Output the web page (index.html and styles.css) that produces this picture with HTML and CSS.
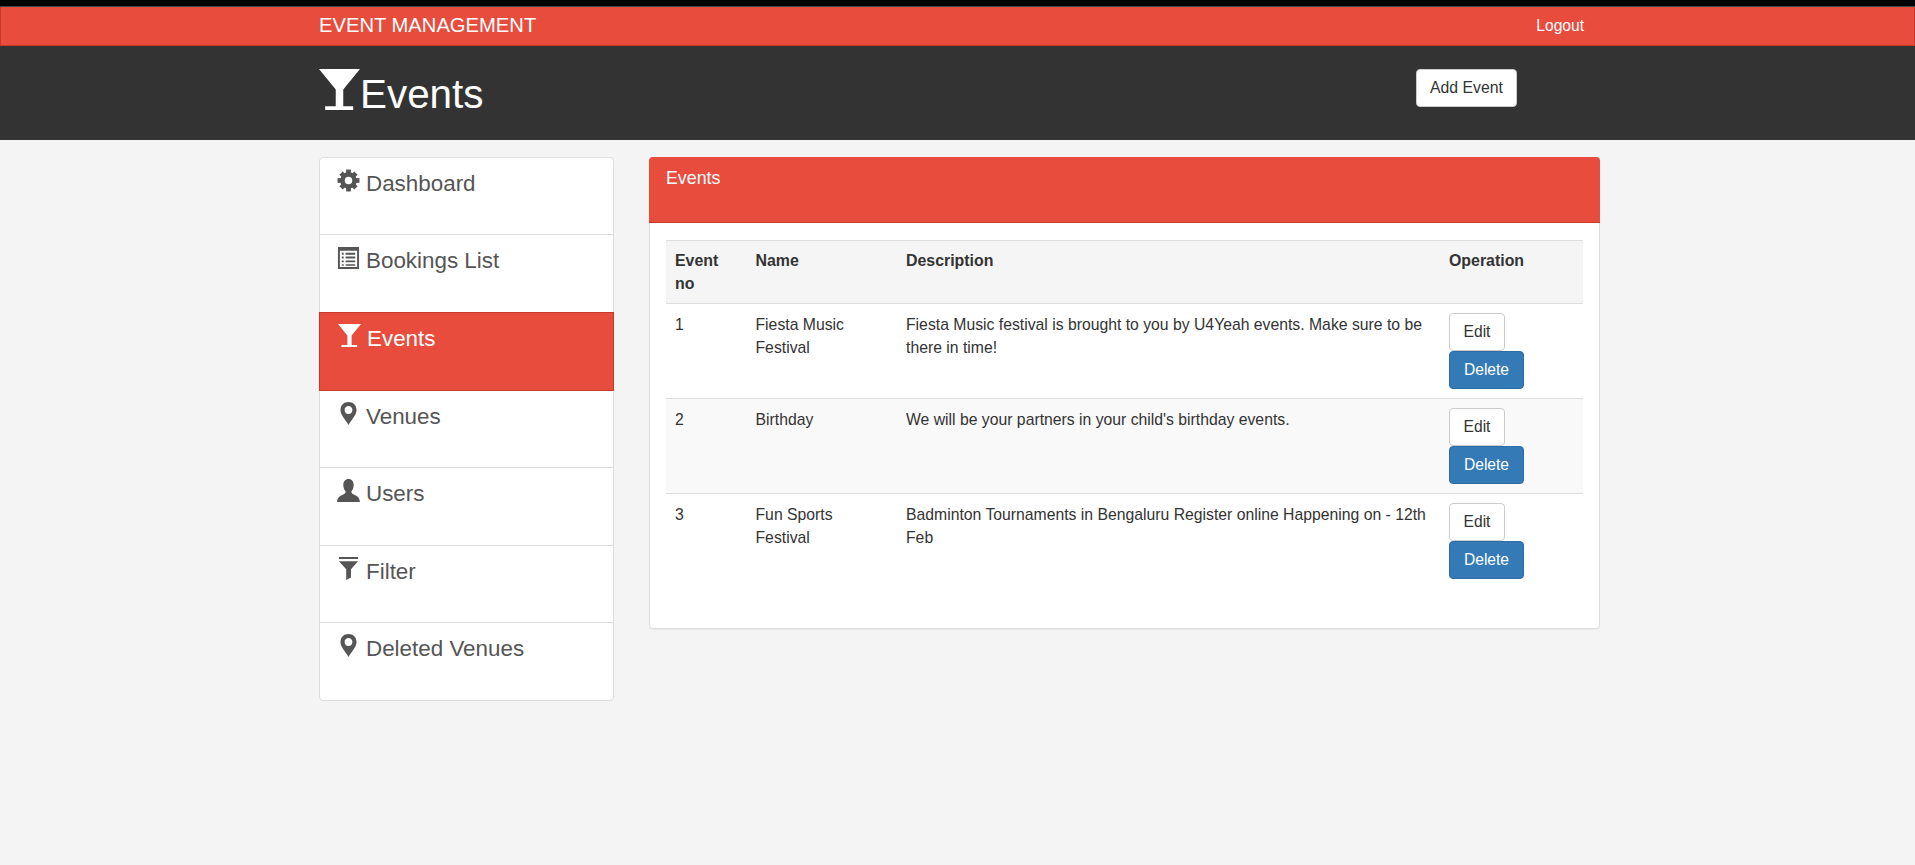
FILE: index.html
```html
<!DOCTYPE html>
<html lang="en">
<head>
    <meta charset="UTF-8">
    <meta name="viewport" content="width=device-width, initial-scale=1.0">
    <title>Event Management</title>
    <link rel="stylesheet" href="styles.css">
</head>
<body>
    <svg class="icon-defs" aria-hidden="true">
        <symbol id="i-glass" viewBox="0 0 24 24">
            <path d="M0 0H24L14.2 12V21.8H20V24H3.6V21.8H9.8V12Z"/>
        </symbol>
        <symbol id="i-cog" viewBox="-.6 -.6 25.2 25.2">
            <circle cx="12" cy="12" r="6.6" fill="none" stroke="currentColor" stroke-width="5"/>
            <rect x="9.4" y="0" width="5.2" height="5"/>
            <rect x="9.4" y="19" width="5.2" height="5"/>
            <rect x="0" y="9.4" width="5" height="5.2"/>
            <rect x="19" y="9.4" width="5" height="5.2"/>
            <rect x="9.4" y="0.5" width="5.2" height="5" transform="rotate(45 12 12)"/>
            <rect x="9.4" y="0.5" width="5.2" height="5" transform="rotate(135 12 12)"/>
            <rect x="9.4" y="0.5" width="5.2" height="5" transform="rotate(225 12 12)"/>
            <rect x="9.4" y="0.5" width="5.2" height="5" transform="rotate(315 12 12)"/>
        </symbol>
        <symbol id="i-list" viewBox="0 0 24 24">
            <path fill-rule="evenodd" d="M1 1H23V24H1ZM3 5V22H21V5Z"/>
            <path d="M5 7H7V9H5ZM9 7H19V9H9ZM5 11H7V13H5ZM9 11H19V13H9ZM5 15H7V17H5ZM9 15H19V17H9ZM5 19H7V20.5H5ZM9 19H19V20.5H9Z"/>
        </symbol>
        <symbol id="i-marker" viewBox="0 0 24 24">
            <path fill-rule="evenodd" d="M12 0C17 0 20.4 3.6 20.4 8.4C20.4 13.6 15 18.6 12 24C9 18.6 3.6 13.6 3.6 8.4C3.6 3.6 7 0 12 0ZM12 4.2C9.6 4.2 7.9 6 7.9 8.4C7.9 10.8 9.6 12.6 12 12.6C14.4 12.6 16.1 10.8 16.1 8.4C16.1 6 14.4 4.2 12 4.2Z"/>
        </symbol>
        <symbol id="i-user" viewBox="0 0 24 24">
            <path d="M12 0C15.4 0 17.4 2.6 17.4 6.2C17.4 9 16.4 11.4 15 13C15 14.6 15.6 15.4 18 16.4C21 17.6 23.4 19 24 24H0C.6 19 3 17.6 6 16.4C8.4 15.4 9 14.6 9 13C7.6 11.4 6.6 9 6.6 6.2C6.6 2.6 8.6 0 12 0Z"/>
        </symbol>
        <symbol id="i-filter" viewBox="0 0 24 24">
            <path d="M2 0H22V2.2H2ZM2 4.4H22L14.6 12.8V21.4L9.6 24V12.8Z"/>
        </symbol>
    </svg>

    <div class="topstrip"></div>

    <header class="navbar">
        <div class="wrap navbar-row">
            <a class="brand" href="#">EVENT MANAGEMENT</a>
            <a class="logout" href="#">Logout</a>
        </div>
    </header>

    <section class="titlebar">
        <div class="wrap titlebar-row">
            <h1 class="page-title"><svg class="title-icon"><use href="#i-glass"/></svg>Events</h1>
            <a class="btn btn-add" href="#">Add Event</a>
        </div>
    </section>

    <main class="wrap content">
        <ul class="side-list">
            <li class="side-item"><svg class="side-icon"><use href="#i-cog"/></svg>Dashboard</li>
            <li class="side-item"><svg class="side-icon"><use href="#i-list"/></svg>Bookings List</li>
            <li class="side-item active"><svg class="side-icon"><use href="#i-glass"/></svg>Events</li>
            <li class="side-item"><svg class="side-icon"><use href="#i-marker"/></svg>Venues</li>
            <li class="side-item"><svg class="side-icon"><use href="#i-user"/></svg>Users</li>
            <li class="side-item"><svg class="side-icon"><use href="#i-filter"/></svg>Filter</li>
            <li class="side-item"><svg class="side-icon"><use href="#i-marker"/></svg>Deleted Venues</li>
        </ul>

        <div class="panel">
            <div class="panel-heading">Events</div>
            <div class="panel-body">
                <table class="events-table">
                    <colgroup>
                        <col class="col-no">
                        <col class="col-name">
                        <col class="col-desc">
                        <col class="col-op">
                    </colgroup>
                    <thead>
                        <tr>
                            <th>Event no</th>
                            <th>Name</th>
                            <th>Description</th>
                            <th>Operation</th>
                        </tr>
                    </thead>
                    <tbody>
                        <tr>
                            <td>1</td>
                            <td>Fiesta Music Festival</td>
                            <td>Fiesta Music festival is brought to you by U4Yeah events. Make sure to be there in time!</td>
                            <td><div class="ops"><a class="btn btn-edit" href="#">Edit</a><a class="btn btn-delete" href="#">Delete</a></div></td>
                        </tr>
                        <tr>
                            <td>2</td>
                            <td>Birthday</td>
                            <td>We will be your partners in your child's birthday events.</td>
                            <td><div class="ops"><a class="btn btn-edit" href="#">Edit</a><a class="btn btn-delete" href="#">Delete</a></div></td>
                        </tr>
                        <tr>
                            <td>3</td>
                            <td>Fun Sports Festival</td>
                            <td>Badminton Tournaments in Bengaluru Register online Happening on - 12th Feb</td>
                            <td><div class="ops"><a class="btn btn-edit" href="#">Edit</a><a class="btn btn-delete" href="#">Delete</a></div></td>
                        </tr>
                    </tbody>
                </table>
            </div>
        </div>
    </main>
</body>
</html>
```

FILE: styles.css
```css
body{margin: 0; background-color: #f4f4f4; color: #333; font-family: "Liberation Sans", Arial, sans-serif; font-size: 15.75px; line-height: 23px;}
a{text-decoration: none; color: inherit;}
.icon-defs{display: none;}
.wrap{width: 1281px; margin-left: 319px;}

.topstrip{height: 6px; background-color: #000; border-bottom: 1px solid #444;}

.navbar{box-sizing: border-box; height: 39px; background-color: #e84c3d; border: 1px solid #c9392b; border-top: 0; color: #fff;}
.navbar-row{display: flex; justify-content: space-between; align-items: center; height: 36px; margin-left: 318px;}
.brand{font-size: 20.2px;}
.logout{font-size: 15.6px; margin-right: 16px;}

.titlebar{height: 94px; background-color: #333;}
.titlebar-row{display: flex; justify-content: space-between; align-items: flex-start;}
.page-title{display: flex; align-items: flex-start; margin: 23px 0 0; height: 41px; font-size: 40.4px; font-weight: 400; line-height: 50px; color: #fff;}
.title-icon{width: 41px; height: 41px; fill: #fff;}
.btn{display: inline-block; box-sizing: border-box; height: 38px; font-size: 15.6px; line-height: 36px; border: 1px solid #ccc; border-radius: 4px; text-align: center;}
.btn-add{width: 101px; margin: 23px 83px 0 0; background-color: #fff; font-size: 15.8px;}

.content{display: flex; align-items: flex-start; gap: 35px; margin-top: 17px;}

.side-list{flex: 0 0 295px; box-sizing: border-box; margin: 0; padding: 0; list-style: none; background-color: #fff; border: 1px solid #ddd; border-radius: 4px; font-size: 22.4px; line-height: 32px; color: #555;}
.side-item{box-sizing: border-box; height: 78px; padding: 10px 15px 0 17px; border-bottom: 1px solid #ddd;}
.side-item:nth-child(1),.side-item:nth-child(4),.side-item:nth-child(6){height: 77px;}
.side-item:last-child{height: 77px; border-bottom: 0;}
.side-item.active{height: 79px; margin: -1px -1px 0; padding-left: 18px; background-color: #e84c3d; border: 1px solid #c9392b; color: #fff;}
.side-icon{width: 23px; height: 23px; margin-right: 6px; vertical-align: -1px; fill: currentColor;}

.panel{flex: 1; background-color: #fff; border: 1px solid #ddd; border-radius: 4px; box-shadow: 0 1px 1px rgba(0,0,0,.05);}
.panel-heading{box-sizing: border-box; height: 66px; margin: -1px -1px 0; padding: 9px 17px; background-color: #e84c3d; border-bottom: 1px solid #c9392b; border-radius: 4px 4px 0 0; font-size: 17.8px; line-height: 25px; color: #fff;}
.panel-body{padding: 17px 16px 40px;}

.events-table{width: 100%; table-layout: fixed; border-collapse: collapse;}
.col-no{width: 80.5px;}
.col-name{width: 150.5px;}
.col-desc{width: 543px;}
.events-table th,.events-table td{padding: 9px; text-align: left; vertical-align: top; border-top: 1px solid #ddd;}
.events-table th{padding: 8px 9px; background-color: #f5f5f5; border-bottom: 1px solid #ddd; font-size: 15.9px;}
.events-table tbody tr:nth-child(2){background-color: #f9f9f9;}
.events-table tbody tr:first-child td{border-top: 0;}
.ops{display: flex; flex-direction: column; align-items: flex-start;}
.btn-edit{width: 56px; background-color: #fff;}
.btn-delete{width: 75px; background-color: #337ab7; border-color: #2e6da4; color: #fff;}
```
